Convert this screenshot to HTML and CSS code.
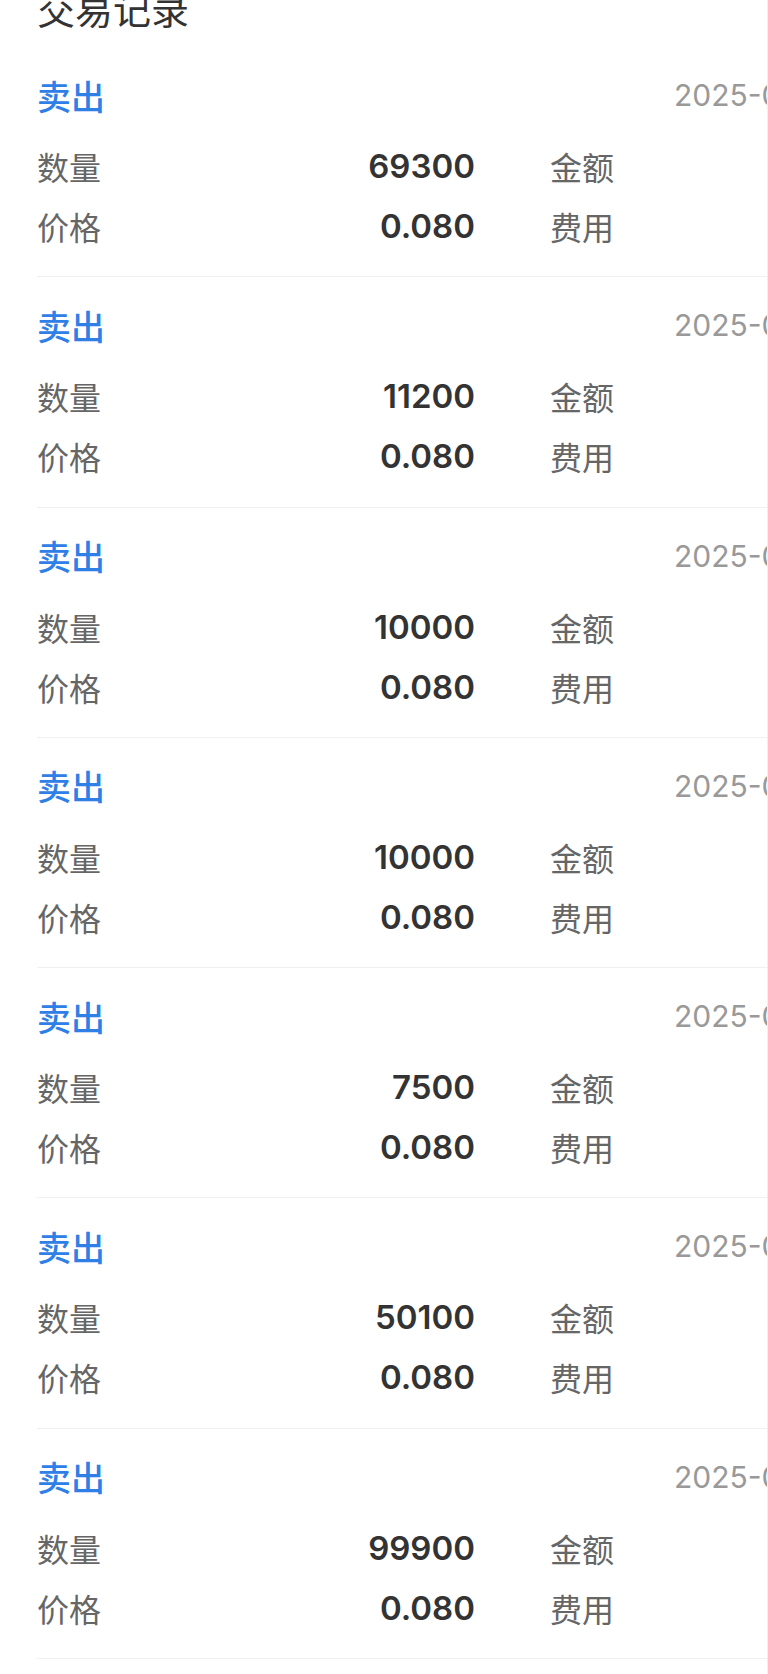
FILE: index.html
```html
<!DOCTYPE html>
<html>
<head>
  <meta charset="utf-8">
  <title>交易记录</title>
  <link rel="stylesheet" href="styles.css">
</head>
<body>
  <div class="page">
    <div class="records">
      <h2 class="title">交易记录</h2>

      <div class="record">
        <div class="record-head">
          <span class="side">卖出</span>
          <span class="time">2025-06-18 14:32:05</span>
        </div>
        <div class="record-grid">
          <span class="label">数量</span><span class="value">69300</span>
          <span class="label">金额</span><span class="value">5544.00</span>
          <span class="label">价格</span><span class="value">0.080</span>
          <span class="label">费用</span><span class="value">5.00</span>
        </div>
      </div>

      <div class="record">
        <div class="record-head">
          <span class="side">卖出</span>
          <span class="time">2025-06-18 14:31:47</span>
        </div>
        <div class="record-grid">
          <span class="label">数量</span><span class="value">11200</span>
          <span class="label">金额</span><span class="value">896.00</span>
          <span class="label">价格</span><span class="value">0.080</span>
          <span class="label">费用</span><span class="value">5.00</span>
        </div>
      </div>

      <div class="record">
        <div class="record-head">
          <span class="side">卖出</span>
          <span class="time">2025-06-18 14:30:12</span>
        </div>
        <div class="record-grid">
          <span class="label">数量</span><span class="value">10000</span>
          <span class="label">金额</span><span class="value">800.00</span>
          <span class="label">价格</span><span class="value">0.080</span>
          <span class="label">费用</span><span class="value">5.00</span>
        </div>
      </div>

      <div class="record">
        <div class="record-head">
          <span class="side">卖出</span>
          <span class="time">2025-06-18 14:29:58</span>
        </div>
        <div class="record-grid">
          <span class="label">数量</span><span class="value">10000</span>
          <span class="label">金额</span><span class="value">800.00</span>
          <span class="label">价格</span><span class="value">0.080</span>
          <span class="label">费用</span><span class="value">5.00</span>
        </div>
      </div>

      <div class="record">
        <div class="record-head">
          <span class="side">卖出</span>
          <span class="time">2025-06-18 14:28:33</span>
        </div>
        <div class="record-grid">
          <span class="label">数量</span><span class="value">7500</span>
          <span class="label">金额</span><span class="value">600.00</span>
          <span class="label">价格</span><span class="value">0.080</span>
          <span class="label">费用</span><span class="value">5.00</span>
        </div>
      </div>

      <div class="record">
        <div class="record-head">
          <span class="side">卖出</span>
          <span class="time">2025-06-18 14:27:10</span>
        </div>
        <div class="record-grid">
          <span class="label">数量</span><span class="value">50100</span>
          <span class="label">金额</span><span class="value">4008.00</span>
          <span class="label">价格</span><span class="value">0.080</span>
          <span class="label">费用</span><span class="value">5.00</span>
        </div>
      </div>

      <div class="record">
        <div class="record-head">
          <span class="side">卖出</span>
          <span class="time">2025-06-18 14:25:41</span>
        </div>
        <div class="record-grid">
          <span class="label">数量</span><span class="value">99900</span>
          <span class="label">金额</span><span class="value">7992.00</span>
          <span class="label">价格</span><span class="value">0.080</span>
          <span class="label">费用</span><span class="value">5.00</span>
        </div>
      </div>

      <div class="record">
        <div class="record-head">
          <span class="side">卖出</span>
          <span class="time">2025-06-18 14:24:02</span>
        </div>
        <div class="record-grid">
          <span class="label">数量</span><span class="value">20000</span>
          <span class="label">金额</span><span class="value">1600.00</span>
          <span class="label">价格</span><span class="value">0.080</span>
          <span class="label">费用</span><span class="value">5.00</span>
        </div>
      </div>
    </div>
  </div>
</body>
</html>
```

FILE: styles.css
```css
  body {
    font-family: Inter, "Noto Sans CJK SC", sans-serif;
    background-color: #fff;
    margin: 0;
    padding: 0;
  }

  .page {
    width: 767px;
    height: 1674px;
    overflow: hidden;
    border-right: 1px solid #efefef;
  }

  .records {
    width: 1100px;
    padding-left: 37px;
  }

  .title {
    font-family: "Noto Sans CJK SC", sans-serif;
    font-size: 38px;
    font-weight: 400;
    line-height: 50px;
    color: #333;
    margin: -17px 0 14px;
  }

  .record {
    padding: 21px 0 20.3px;
    border-bottom: 1px solid #f0f0f0;
  }

  .record-head {
    display: flex;
    justify-content: space-between;
    align-items: center;
    height: 54px;
    width: 1040px;
  }

  .side {
    font-family: "Noto Sans CJK SC", sans-serif;
    font-size: 34px;
    font-weight: 500;
    color: #2f80e6;
  }

  .time {
    font-size: 30px;
    color: #999;
    width: 403px;
    white-space: nowrap;
  }

  .record-grid {
    display: grid;
    grid-template-columns: 80px 358px 80px 358px;
    margin-top: 14px;
    width: 951px;
  }

  .record-grid .label:nth-child(3),
  .record-grid .label:nth-child(7) {
    margin-left: 75px;
  }

  .label {
    font-family: "Noto Sans CJK SC", sans-serif;
    font-size: 32px;
    line-height: 60px;
    color: #666;
    white-space: nowrap;
  }

  .value {
    font-size: 33px;
    font-weight: 600;
    line-height: 60px;
    color: #333;
    text-align: right;
  }
```
